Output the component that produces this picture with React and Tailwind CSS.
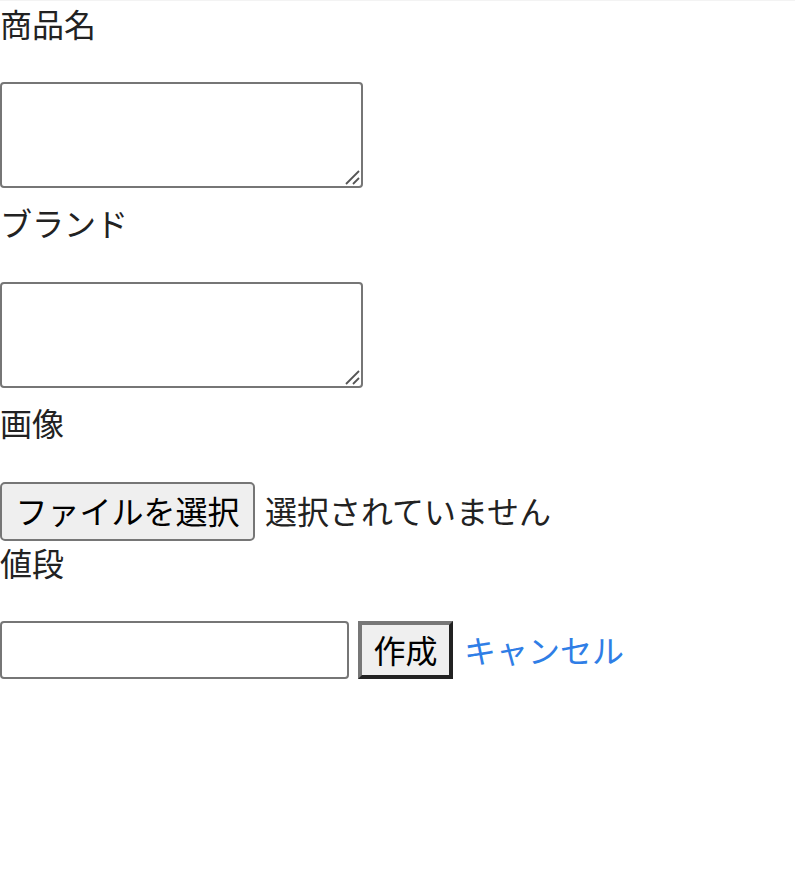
function Area() {
  return (
    <div className="relative w-[363px] h-[106px]">
      <textarea className="block w-[363px] h-[106px] border-2 border-[#767676] rounded-[4px] bg-white text-[26px] resize-none" />
      <svg className="absolute right-[3px] bottom-[3px] w-[16px] h-[16px] pointer-events-none" viewBox="0 0 16 16">
        <line x1="2" y1="15" x2="15" y2="2" stroke="#555" strokeWidth="1.8" />
        <line x1="9" y1="15" x2="15" y2="9" stroke="#555" strokeWidth="1.8" />
      </svg>
    </div>
  );
}

export default function App() {
  const font = { fontFamily: '"Noto Sans CJK JP", "Noto Sans", sans-serif' };
  return (
    <div className="min-h-[894px] w-full bg-white text-[#222] text-[32px] border-t border-[#f3f3f3]" style={font}>
      <div className="flex flex-col items-start">
        <label className="block h-[40px] leading-[36px] mt-[4px]">商品名</label>
        <div className="mt-[37px]"><Area /></div>
        <label className="block h-[40px] leading-[36px] mt-[16px]">ブランド</label>
        <div className="mt-[38px]"><Area /></div>
        <label className="block h-[40px] leading-[36px] mt-[16px]">画像</label>
        <div className="flex items-center mt-[38px] h-[59px]">
          <button className="h-[59px] w-[255px] border-2 border-[#767676] rounded-[5px] bg-[#efefef] text-[32px] leading-none text-black flex items-center justify-center pb-[3px]">
            ファイルを選択
          </button>
          <span className="ml-[10px] leading-none pb-[3px]">選択されていません</span>
        </div>
        <label className="block h-[40px] leading-[36px] mt-[3px]">値段</label>
        <div className="flex items-center mt-[37px] h-[58px]">
          <input type="text" className="w-[349px] h-[58px] border-2 border-[#767676] rounded-[4px] bg-white text-[26px] px-2" />
          <button className="ml-[9px] h-[58px] w-[95px] border-4 border-t-[#777] border-l-[#777] border-b-[#222] border-r-[#222] bg-[#efefef] text-black text-[32px] leading-none flex items-center justify-center pb-[3px]">
            作成
          </button>
          <a href="#" className="ml-[11px] text-[#2f7ee6] leading-none pb-[3px]">キャンセル</a>
        </div>
      </div>
    </div>
  );
}
